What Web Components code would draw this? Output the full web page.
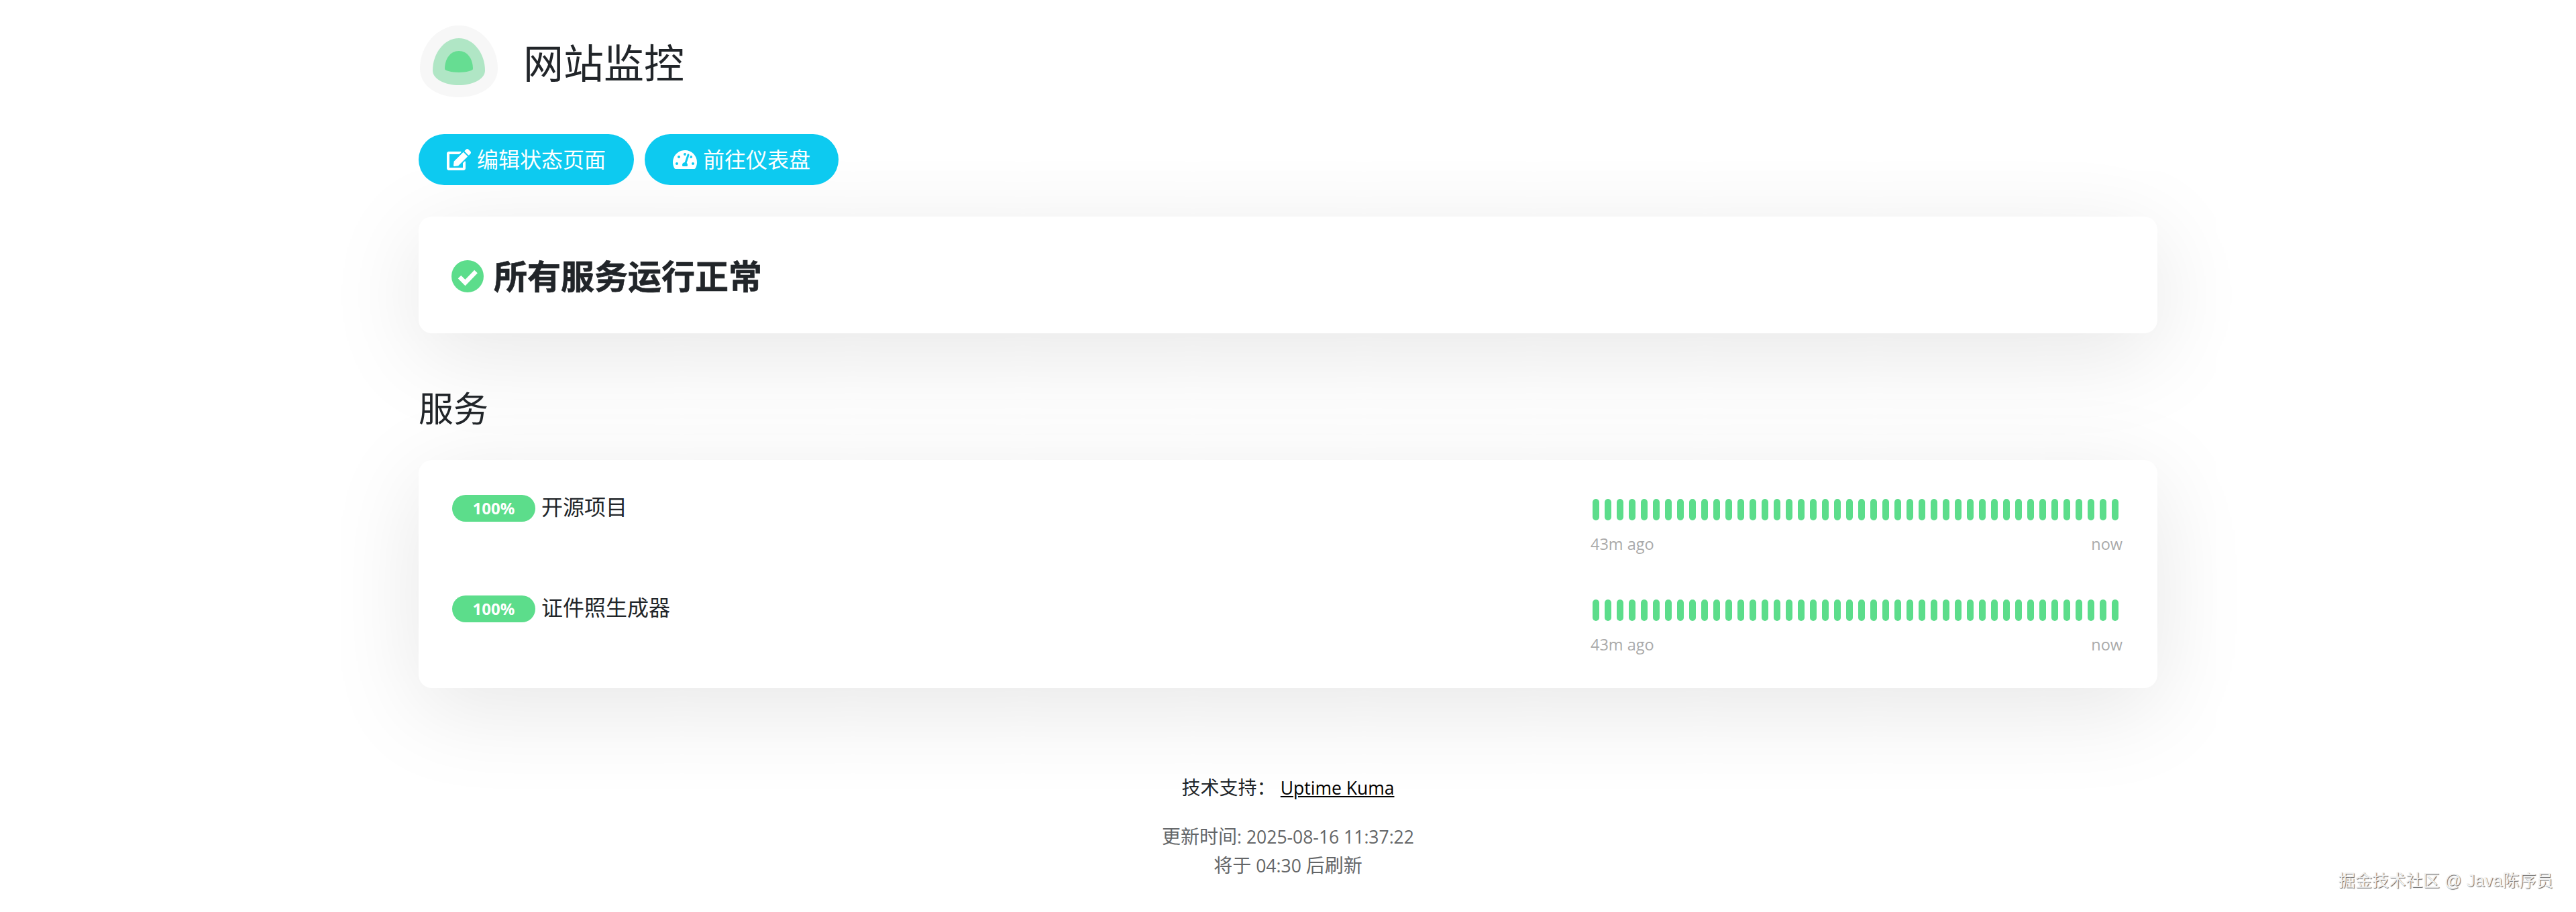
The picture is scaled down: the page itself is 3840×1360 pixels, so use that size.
<!DOCTYPE html>
<html>
<head>
<meta charset="utf-8">
<style>
  html, body { margin: 0; background: #fff; }
  body {
    font-family: "Open Sans", "Noto Sans CJK SC", sans-serif;
    color: #212529;
  }
</style>
</head>
<body>
<status-page></status-page>

<script>
const CJK = '"Open Sans", "Noto Sans CJK SC", sans-serif'

class SiteHeader extends HTMLElement {
  constructor() {
    super()
    this.attachShadow({ mode: 'open' }).innerHTML = /*html*/`
      <style>
        :host { display: flex; align-items: center; gap: 38px; height: 108px; padding-left: 2px; }
        svg { width: 116px; height: 108px; }
        h1 { margin: 4px 0 0; font: 400 60px/1 ${CJK}; color: #212529; }
      </style>
      <svg viewBox="0 0 116 108">
        <path d="M58 0C90 0 116 30 116 64C116 92 88 107 58 107C28 107 0 92 0 64C0 30 26 0 58 0Z" fill="#f7f7f7"/>
        <path d="M58 19C80 19 97 42 97 67C97 81 77 89 58 89C39 89 19 81 19 67C19 42 36 19 58 19Z" fill="#b0e6c5"/>
        <path d="M58 38C71 38 79 50 79 65C79 67 69 70 58 70C47 70 37 67 37 65C37 50 45 38 58 38Z" fill="#66dd92"/>
      </svg>
      <h1><slot></slot></h1>
    `
  }
}

class PillButton extends HTMLElement {
  constructor() {
    super()
    this.attachShadow({ mode: 'open' }).innerHTML = /*html*/`
      <style>
        :host {
          display: inline-flex; align-items: center; justify-content: center;
          height: 76px; box-sizing: border-box; padding: 0 42px; gap: 9px;
          border-radius: 38px; background: #0dcaf0; color: #fff;
          font: 400 32px/1 ${CJK};
        }
        ::slotted(svg) { width: 36px; height: 32px; fill: #fff; display: block; }
      </style>
      <slot name="icon"></slot><slot></slot>
    `
  }
}

class WhiteCard extends HTMLElement {
  constructor() {
    super()
    this.attachShadow({ mode: 'open' }).innerHTML = /*html*/`
      <style>
        :host {
          display: block; background: #fff; border-radius: 20px;
          box-shadow: 0 30px 140px rgba(0, 0, 0, .1);
        }
      </style>
      <slot></slot>
    `
  }
}

class OverallStatus extends HTMLElement {
  constructor() {
    super()
    this.attachShadow({ mode: 'open' }).innerHTML = /*html*/`
      <style>
        :host {
          display: flex; align-items: center; gap: 15px; height: 170px;
          padding: 4px 0 0 49px; font: 700 50px/1 ${CJK}; color: #212529;
          -webkit-text-stroke: .6px #212529;
        }
        svg { width: 48px; height: 48px; display: block; }
      </style>
      <svg viewBox="0 0 48 48">
        <circle cx="24" cy="24" r="24" fill="#5cdd8b"/>
        <path d="M12 25l8.500 8.500L36.500 17" fill="none" stroke="#fff" stroke-width="6.500"/>
      </svg>
      <slot></slot>
    `
  }
}

class MonitorRow extends HTMLElement {
  constructor() {
    super()
    const beats = '<i></i>'.repeat(44)
    this.attachShadow({ mode: 'open' }).innerHTML = /*html*/`
      <style>
        :host { display: flex; justify-content: space-between; height: 150px; }
        .info { display: flex; align-items: flex-start; gap: 9px; }
        .pill {
          width: 124px; height: 40px; border-radius: 20px; background: #5cdd8b;
          color: #fff; font: 700 24px/40px ${CJK}; text-align: center;
        }
        .name { font: 400 32px/40px ${CJK}; color: #212529; margin-top: -2px; }
        .beat { width: 793px; }
        .bars { display: flex; gap: 8px; height: 32px; margin: 6px 0 0 3px; }
        i { width: 10px; height: 32px; border-radius: 5px; background: #5cdd8b; flex: none; }
        .labels {
          display: flex; justify-content: space-between; margin-top: 19px;
          font: 400 23.500px/32px ${CJK}; color: #aaa;
        }
      </style>
      <div class="info">
        <div class="pill">100%</div>
        <div class="name"><slot></slot></div>
      </div>
      <div class="beat">
        <div class="bars">${beats}</div>
        <div class="labels"><span>43m ago</span><span>now</span></div>
      </div>
    `
  }
}

class PageFooter extends HTMLElement {
  constructor() {
    super()
    this.attachShadow({ mode: 'open' }).innerHTML = /*html*/`
      <style>
        :host { display: block; text-align: center; font: 400 28px/42px ${CJK}; color: #212529; }
        .support { margin-bottom: 30px; }
        a { color: #000; text-decoration: underline; }
        a, b { font-size: 26.500px; font-weight: 400; }
        .refresh { color: #646668; }
      </style>
      <div class="support">技术支持： <a>Uptime Kuma</a></div>
      <div class="refresh">更新时间<b>: 2025-08-16 11:37:22</b></div>
      <div class="refresh">将于<b> 04:30 </b>后刷新</div>
    `
  }
}

class Watermark extends HTMLElement {
  constructor() {
    super()
    this.attachShadow({ mode: 'open' }).innerHTML = /*html*/`
      <style>
        :host {
          position: absolute; right: 34px; bottom: 32px;
          font: 400 25px/30px "Liberation Sans", "Noto Sans CJK SC", sans-serif;
          letter-spacing: .2px;
          color: #f2f2f2; text-shadow: 1px 1px 1px #666, -1px -1px 0 #fff;
        }
      </style>
      <slot></slot>
    `
  }
}

class StatusPage extends HTMLElement {
  constructor() {
    super()
    this.attachShadow({ mode: 'open' }).innerHTML = /*html*/`
      <style>
        :host { display: block; position: relative; height: 1360px; overflow: hidden; }
        .wrap { width: 2592px; margin: 0 auto; padding-top: 38px; }
        .btns { display: flex; gap: 16px; margin: 54px 0 47px; }
        h2 { margin: 84px 0 49px; font: 400 52px/56px ${CJK}; color: #212529; }
        .monitors { padding: 52px 52px 0 50px; height: 340px; box-sizing: border-box; }
        page-footer { margin-top: 127px; }
      </style>
      <div class="wrap">
        <site-header>网站监控</site-header>
        <div class="btns">
          <pill-button>
            <svg slot="icon" viewBox="0 0 576 512"><path d="M402.600 83.200l90.200 90.200c3.800 3.800 3.800 10 0 13.800L274.400 405.600l-92.800 10.300c-12.400 1.400-22.900-9.100-21.500-21.500l10.300-92.800L388.800 83.200c3.800-3.800 10-3.800 13.800 0zm162-22.900l-48.800-48.800c-15.200-15.200-39.900-15.200-55.200 0l-35.400 35.400c-3.800 3.800-3.800 10 0 13.800l90.200 90.200c3.800 3.800 10 3.800 13.800 0l35.400-35.400c15.200-15.300 15.200-40 0-55.200zM384 346.200V448H64V128h229.800c3.200 0 6.200-1.300 8.500-3.500l40-40c7.600-7.600 2.200-20.500-8.500-20.500H48C21.500 64 0 85.500 0 112v352c0 26.500 21.500 48 48 48h352c26.500 0 48-21.500 48-48V306.200c0-10.700-12.900-16-20.500-8.500l-40 40c-2.200 2.300-3.500 5.300-3.500 8.500z"/></svg>
            编辑状态页面
          </pill-button>
          <pill-button>
            <svg slot="icon" viewBox="0 0 576 512"><path d="M288 32C128.900 32 0 160.900 0 320c0 52.800 14.300 102.300 39.100 144.800 5.600 9.600 16.300 15.200 27.400 15.200h443c11.100 0 21.800-5.600 27.400-15.200C561.800 422.300 576 372.800 576 320c0-159.100-128.900-288-288-288zm0 64c14.700 0 26.600 10.100 30.300 23.700-1.100 2.300-2.600 4.200-3.500 6.700l-9.200 27.700c-5.100 3.500-11 6-17.600 6-17.700 0-32-14.300-32-32S270.300 96 288 96zM96 384c-17.700 0-32-14.300-32-32s14.300-32 32-32 32 14.300 32 32-14.300 32-32 32zm48-160c-17.700 0-32-14.300-32-32s14.300-32 32-32 32 14.300 32 32-14.300 32-32 32zm246.800-72.400l-61.300 184C343.100 347.300 352 364.500 352 384c0 11.700-3.400 22.600-8.900 32H232.900c-5.500-9.500-8.900-20.300-8.900-32 0-33.900 26.500-61.400 59.900-63.600l61.300-184c4.200-12.600 17.700-19.500 30.400-15.200 12.600 4.200 19.400 17.800 15.200 30.400zm14.700 57.200l15.500-46.600c3.500-1.300 7.100-2.200 11-2.200 17.700 0 32 14.300 32 32s-14.300 32-32 32c-11.400 0-20.900-6.300-26.500-15.200zM480 384c-17.700 0-32-14.300-32-32s14.300-32 32-32 32 14.300 32 32-14.300 32-32 32z"/></svg>
            前往仪表盘
          </pill-button>
        </div>
        <white-card><overall-status>所有服务运行正常</overall-status></white-card>
        <h2>服务</h2>
        <white-card>
          <div class="monitors">
            <monitor-row>开源项目</monitor-row>
            <monitor-row>证件照生成器</monitor-row>
          </div>
        </white-card>
        <page-footer></page-footer>
      </div>
      <water-mark>掘金技术社区 @ Java陈序员</water-mark>
    `
  }
}

customElements.define('site-header', SiteHeader)
customElements.define('pill-button', PillButton)
customElements.define('white-card', WhiteCard)
customElements.define('overall-status', OverallStatus)
customElements.define('monitor-row', MonitorRow)
customElements.define('page-footer', PageFooter)
customElements.define('water-mark', Watermark)
customElements.define('status-page', StatusPage)
</script>
</body>
</html>
